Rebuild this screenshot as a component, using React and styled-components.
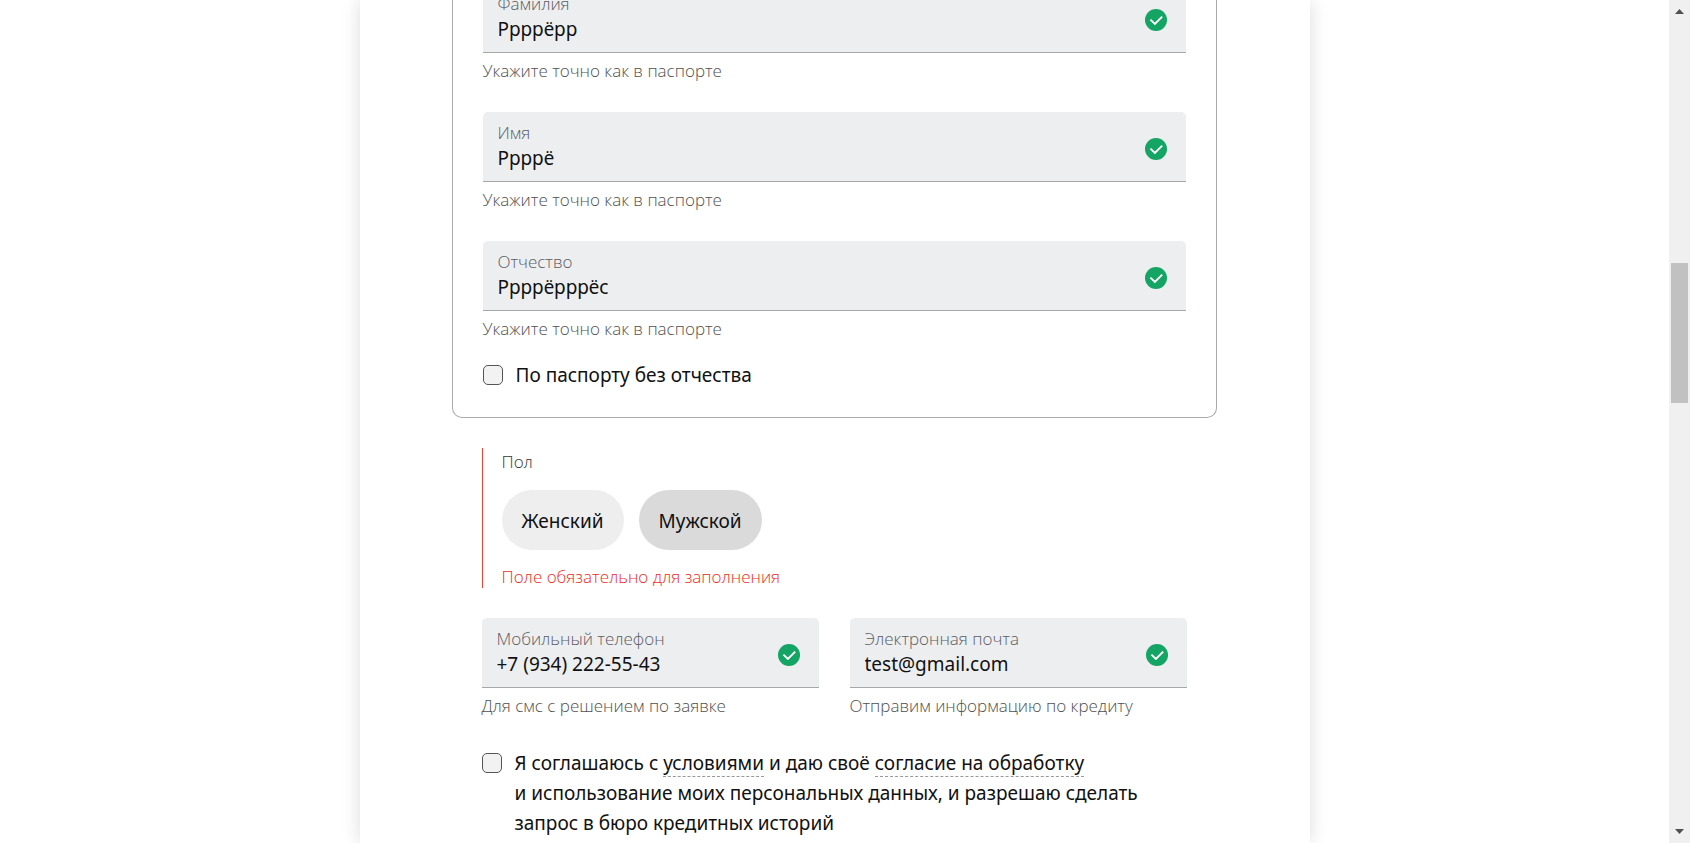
import React, { useState } from 'react';
import styled, { createGlobalStyle } from 'styled-components';

const GlobalStyle = createGlobalStyle`
  *, *::before, *::after { box-sizing: border-box; }
  body {
    margin: 0;
    background: #fff;
    color: #111;
    font-family: "Noto Sans", "Open Sans", sans-serif;
  }
`;

const Viewport = styled.div`
  display: grid;
  grid-template-columns: minmax(0, 1fr) 21px;
  height: 100vh;
  overflow: hidden;
`;

const Page = styled.main`
  overflow: hidden;
`;

const Sheet = styled.form`
  display: flex;
  flex-direction: column;
  gap: 30px;
  max-width: 950px;
  min-height: 100%;
  margin: 0 auto;
  padding: 0 93px 0 92px;
  background: #fff;
  box-shadow: 0 0 18px rgba(0, 0, 0, 0.14);
`;

const NameCard = styled.section`
  margin-top: -17px;
  padding: 0 30px 27px;
  border: 1px solid #aaa;
  border-top: 0;
  border-radius: 0 0 10px 10px;
`;

const NameFields = styled.div`
  display: flex;
  flex-direction: column;
  gap: 29px;
  margin-bottom: 19px;
`;

const FieldBox = styled.div`
  display: flex;
  align-items: flex-start;
  height: 70px;
  padding: 9px 19px 0 15px;
  background: #edeef0;
  border-bottom: 1px solid #a6a7a9;
  border-radius: 5px 5px 0 0;
`;

const FieldText = styled.div`
  display: flex;
  flex: 1;
  flex-direction: column;
  min-width: 0;
`;

const FieldLabel = styled.label`
  color: #5a5d64;
  font-family: "Open Sans", sans-serif;
  font-size: 17px;
  font-weight: 300;
  line-height: 24px;
`;

const FieldInput = styled.input`
  width: 100%;
  height: 26px;
  padding: 0;
  border: 0;
  outline: 0;
  background: transparent;
  color: #111;
  font-family: inherit;
  font-size: 19px;
  font-weight: 400;
  line-height: 26px;
`;

const CheckIcon = styled.svg`
  flex: none;
  width: 22px;
  height: 22px;
  margin-top: 17px;
`;

const Hint = styled.p`
  margin: 0;
  padding-top: 6px;
  color: #505050;
  font-family: "Open Sans", sans-serif;
  font-size: 17px;
  font-weight: 300;
  line-height: 24px;
`;

const ContactArea = styled.div`
  display: flex;
  flex-direction: column;
  gap: 30px;
  padding: 0 30px;
`;

const GenderGroup = styled.fieldset`
  display: flex;
  flex-direction: column;
  min-width: 0;
  height: 140px;
  margin: 0;
  padding: 0 0 0 19px;
  border: 0;
  border-left: 1px solid #ef4135;
`;

const GroupTitle = styled.span`
  padding: 2px 0 16px;
  color: #33353a;
  font-family: "Open Sans", sans-serif;
  font-size: 17px;
  font-weight: 300;
  line-height: 24px;
`;

const Pills = styled.div`
  display: flex;
  gap: 15px;
`;

const Pill = styled.button`
  height: 60px;
  padding: 2px 20px 0;
  border: 0;
  border-radius: 30px;
  background: ${(p) => (p.$active ? '#dadada' : '#eee')};
  color: #111;
  font-family: inherit;
  font-size: 19px;
  font-weight: 400;
  line-height: 28px;
  cursor: pointer;
`;

const ErrorText = styled.span`
  padding-top: 15px;
  color: #f02a1d;
  font-family: "Open Sans", sans-serif;
  font-size: 17px;
  font-weight: 300;
  line-height: 24px;
`;

const ContactFields = styled.div`
  display: grid;
  grid-template-columns: 1fr 1fr;
  gap: 31px;
`;

const CheckRow = styled.div`
  display: flex;
  align-items: flex-start;
  gap: 13px;
`;

const Checkbox = styled.input`
  flex: none;
  appearance: none;
  width: 20px;
  height: 20px;
  margin: 5px 0 0;
  border: 1px solid #555;
  border-radius: 5px;
  background: #f2f2f2;

  &:checked { background: #14a463; }
`;

const CheckLabel = styled.label`
  font-size: 19px;
  font-weight: 400;
  line-height: 30px;
`;

const TermsLink = styled.a`
  border-bottom: 1px dashed #999;
  color: inherit;
  text-decoration: none;
`;

const Scrollbar = styled.div`
  display: flex;
  flex-direction: column;
  align-items: center;
  padding: 9px 2px;
  background: #f0f0f0;
`;

const Arrow = styled.svg`
  flex: none;
  width: 9px;
  height: 5px;
  fill: #505050;
`;

const Track = styled.div`
  display: flex;
  flex: 1;
  flex-direction: column;
  width: 100%;
`;

const Spacer = styled.div`
  flex: ${(p) => p.$share};
`;

const Thumb = styled.div`
  flex: 140;
  background: #c1c1c1;
`;

function Field({ id, label, value, hint, type = 'text' }) {
  return (
    <div>
      <FieldBox>
        <FieldText>
          <FieldLabel htmlFor={id}>{label}</FieldLabel>
          <FieldInput id={id} type={type} defaultValue={value} aria-describedby={`${id}-hint`} />
        </FieldText>
        <CheckIcon viewBox="0 0 22 22" aria-hidden="true">
          <circle cx="11" cy="11" r="11" fill="#14a463" />
          <path d="M5.4 10.6 9.9 15 17.2 7.7" fill="none" stroke="#fff" strokeWidth="1.9" />
        </CheckIcon>
      </FieldBox>
      <Hint id={`${id}-hint`}>{hint}</Hint>
    </div>
  );
}

const nameFields = [
  { id: 'surname', label: 'Фамилия', value: 'Ррррёрр' },
  { id: 'name', label: 'Имя', value: 'Ррррё' },
  { id: 'patronymic', label: 'Отчество', value: 'Ррррёрррёс' },
];

export default function App() {
  const [gender, setGender] = useState('Мужской');

  return (
    <>
      <GlobalStyle />
      <Viewport>
        <Page>
          <Sheet>
            <NameCard>
              <NameFields>
                {nameFields.map((f) => (
                  <Field key={f.id} {...f} hint="Укажите точно как в паспорте" />
                ))}
              </NameFields>
              <CheckRow>
                <Checkbox type="checkbox" id="no-patronymic" />
                <CheckLabel htmlFor="no-patronymic">По паспорту без отчества</CheckLabel>
              </CheckRow>
            </NameCard>

            <ContactArea>
              <GenderGroup aria-labelledby="gender-title">
                <GroupTitle id="gender-title">Пол</GroupTitle>
                <Pills>
                  {['Женский', 'Мужской'].map((g) => (
                    <Pill
                      key={g}
                      type="button"
                      aria-pressed={gender === g}
                      $active={gender === g}
                      onClick={() => setGender(g)}
                    >
                      {g}
                    </Pill>
                  ))}
                </Pills>
                <ErrorText>Поле обязательно для заполнения</ErrorText>
              </GenderGroup>

              <ContactFields>
                <Field
                  id="phone"
                  type="tel"
                  label="Мобильный телефон"
                  value="+7 (934) 222-55-43"
                  hint="Для смс с решением по заявке"
                />
                <Field
                  id="email"
                  type="email"
                  label="Электронная почта"
                  value="test@gmail.com"
                  hint="Отправим информацию по кредиту"
                />
              </ContactFields>

              <CheckRow>
                <Checkbox type="checkbox" id="consent" />
                <CheckLabel htmlFor="consent">
                  Я соглашаюсь с <TermsLink href="#terms">условиями</TermsLink> и даю своё{' '}
                  <TermsLink href="#consent-text">согласие на обработку</TermsLink>{' '}
                  и&nbsp;использование моих персональных данных, и разрешаю сделать
                  запрос в бюро кредитных историй
                </CheckLabel>
              </CheckRow>
            </ContactArea>
          </Sheet>
        </Page>

        <Scrollbar aria-hidden="true">
          <Arrow viewBox="0 0 9 5"><path d="M0 5 4.5 0 9 5Z" /></Arrow>
          <Track>
            <Spacer $share={249} />
            <Thumb />
            <Spacer $share={426} />
          </Track>
          <Arrow viewBox="0 0 9 5"><path d="M0 0 4.5 5 9 0Z" /></Arrow>
        </Scrollbar>
      </Viewport>
    </>
  );
}
